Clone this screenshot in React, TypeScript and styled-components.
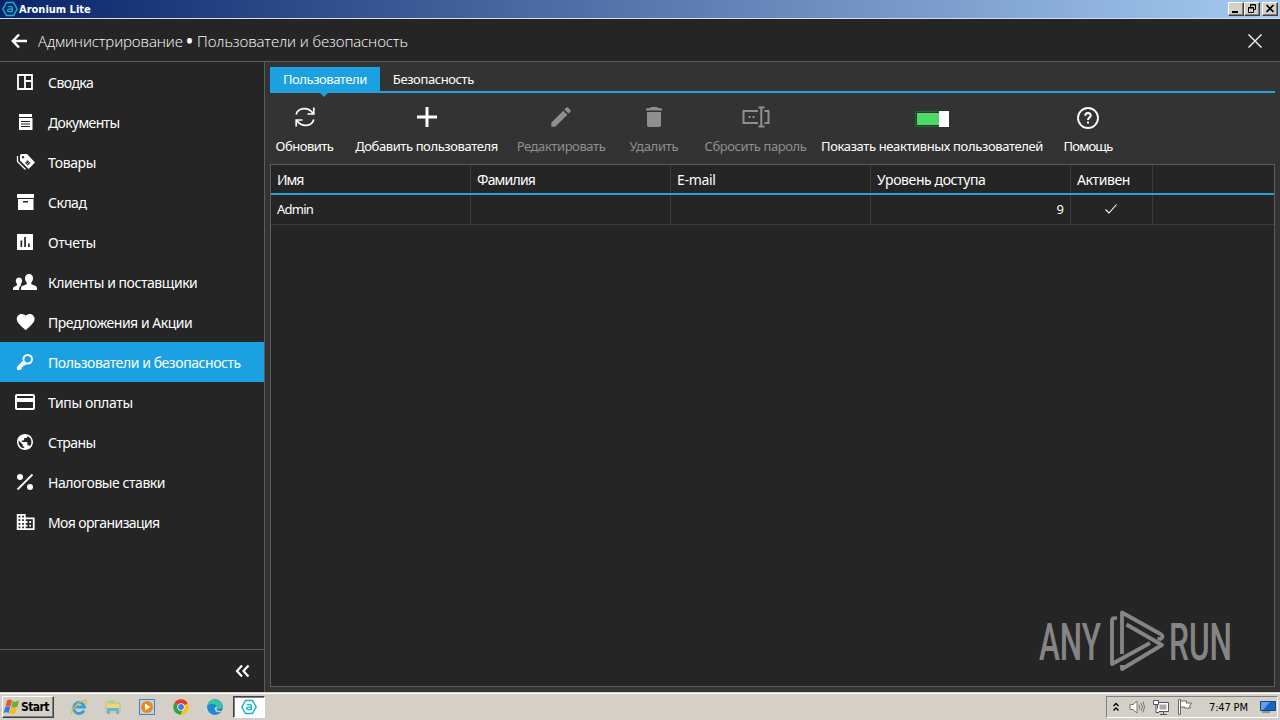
import { useState } from "react";
import type { ReactNode } from "react";
import styled, { createGlobalStyle } from "styled-components";
import { MdBusiness, MdCreditCard, MdEdit, MdFavorite, MdPublic } from "react-icons/md";

const GlobalStyle = createGlobalStyle`
  * {
    box-sizing: border-box;
  }

  body {
    margin: 0;
    background: #252525;
    overflow: hidden;
  }

  button {
    padding: 0;
    border: 0;
    background: none;
    color: inherit;
    font: inherit;
    letter-spacing: inherit;
  }
`;

const Screen = styled.div`
  width: 1280px;
  height: 720px;
  display: flex;
  flex-direction: column;
  color: #fff;
  background: #252525;
  font-family: "Noto Sans", "Open Sans", sans-serif;
  font-size: 14px;
  white-space: nowrap;
`;

/* ---------- window frame ---------- */

const TitleBar = styled.div`
  height: 19px;
  flex: none;
  display: flex;
  align-items: center;
  padding: 0 2px;
  background: linear-gradient(90deg, #0a246a, #a6caf0);
  border-bottom: 1px solid #d4e0ee;
  font-family: "DejaVu Sans Condensed", "DejaVu Sans", sans-serif;
  font-size: 11px;
  font-weight: bold;
`;

const AppName = styled.span`
  flex: 1;
  margin-left: 1px;
`;

const WinButton = styled.button<{ $gap?: boolean }>`
  width: 16px;
  height: 14px;
  display: flex;
  margin-left: ${(props) => (props.$gap ? "2px" : "0")};
  background: #d4d0c8;
  border: 1px solid;
  border-color: #fff #404040 #404040 #fff;
  box-shadow: inset -1px -1px 0 #808080;
`;

const Header = styled.header`
  height: 43px;
  flex: none;
  display: flex;
  align-items: center;
  padding: 1px 17px 0 10px;
  border-bottom: 1px solid #5c5c5c;
`;

const PageTitle = styled.h1`
  flex: 1;
  margin: 0 0 0 9px;
  font-family: "Open Sans", "Noto Sans", sans-serif;
  font-size: 15px;
  font-weight: 300;
  letter-spacing: -0.12px;
`;

const Bullet = styled.span`
  margin-right: 1px;
  font-weight: 800;
`;

const Body = styled.div`
  flex: 1;
  min-height: 0;
  display: flex;
`;

/* ---------- sidebar ---------- */

const Sidebar = styled.nav`
  width: 265px;
  flex: none;
  display: flex;
  flex-direction: column;
  border-right: 1px solid #5c5c5c;
`;

const NavItem = styled.button<{ $active: boolean; $spacing: number }>`
  height: 40px;
  display: flex;
  align-items: center;
  padding-left: 13px;
  gap: 11px;
  text-align: left;
  letter-spacing: ${(props) => props.$spacing}px;
  background: ${(props) => (props.$active ? "#1ba1e2" : "transparent")};
`;

const NavFooter = styled.div`
  height: 43px;
  margin-top: auto;
  display: flex;
  align-items: center;
  justify-content: flex-end;
  padding-right: 14px;
  border-top: 1px solid #5c5c5c;
`;

/* ---------- content ---------- */

const Content = styled.main`
  flex: 1;
  display: flex;
  flex-direction: column;
  padding: 5px;
  background: #333;
`;

const TabBar = styled.div`
  height: 26px;
  flex: none;
  display: flex;
  border-bottom: 2px solid #2ba0d8;
`;

const Tab = styled.button<{ $active: boolean; $spacing: number }>`
  position: relative;
  height: 24px;
  padding: 0 13px;
  font-size: 13px;
  letter-spacing: ${(props) => props.$spacing}px;
  background: ${(props) => (props.$active ? "#1ba1e2" : "transparent")};

  &::after {
    content: "";
    display: ${(props) => (props.$active ? "block" : "none")};
    position: absolute;
    left: 50%;
    top: 25px;
    margin-left: -6px;
    border: 5px solid transparent;
    border-top-color: #1ba1e2;
    border-bottom: 0;
  }
`;

const Toolbar = styled.div`
  height: 71px;
  flex: none;
  display: flex;
`;

const ToolButton = styled.button<{ $width: number; $muted?: boolean; $spacing: number }>`
  width: ${(props) => props.$width}px;
  display: flex;
  flex-direction: column;
  align-items: center;
  padding-top: 9px;
  gap: 5px;
  font-size: 13px;
  line-height: 18px;
  letter-spacing: ${(props) => props.$spacing}px;
  color: ${(props) => (props.$muted ? "#8f8f8f" : "#fff")};
`;

const ToolIcon = styled.span`
  height: 30px;
  display: flex;
  align-items: center;
`;

const Toggle = styled.span`
  width: 34px;
  height: 16px;
  display: flex;
  justify-content: flex-end;
  margin-top: 3px;
  background: #4cd964;
  border: 1px solid #1d6b2b;
  border-width: 1px 0 1px 1px;
  box-shadow: inset 1px 1px 0 #303030, inset 0 -1px 0 #303030;
`;

const ToggleKnob = styled.span`
  width: 10px;
  height: 16px;
  margin-top: -1px;
  background: #fff;
`;

const Grid = styled.div`
  flex: 1;
  position: relative;
  background: #252525;
  border: 1px solid #5c5c5c;
`;

const GridRow = styled.div<{ $head?: boolean }>`
  height: 30px;
  display: grid;
  grid-template-columns: 200px 200px 200px 200px 82px 1fr;
  font-size: ${(props) => (props.$head ? 14 : 13)}px;
  border-bottom: ${(props) => (props.$head ? "2px solid #2ba0d8" : "1px solid #3c3c3c")};
`;

const Cell = styled.div<{ $align?: string; $spacing?: number; $body?: boolean }>`
  display: flex;
  align-items: center;
  justify-content: ${(props) => props.$align ?? "flex-start"};
  padding: 0 6px ${(props) => (props.$body ? 2 : 0)}px;
  letter-spacing: ${(props) => props.$spacing ?? 0}px;
  border-right: 1px solid #3c3c3c;

  &:last-child {
    border-right: 0;
  }
`;

const Watermark = styled.svg`
  position: absolute;
  right: 34px;
  bottom: 7px;
  overflow: visible;
`;

/* ---------- taskbar ---------- */

const Taskbar = styled.footer`
  height: 28px;
  flex: none;
  display: flex;
  align-items: center;
  padding: 1px 2px 0;
  background: #d4d0c8;
  border-top: 1px solid #d4d0c8;
  box-shadow: inset 0 1px 0 #fff;
  color: #000;
  font-family: "DejaVu Sans Condensed", "DejaVu Sans", sans-serif;
`;

const StartButton = styled.button`
  width: 52px;
  height: 22px;
  display: flex;
  align-items: center;
  font-size: 12px;
  font-weight: bold;
  letter-spacing: -0.6px;
  border: 1px solid;
  border-color: #fff #404040 #404040 #fff;
  box-shadow: inset -1px -1px 0 #808080;
`;

const Launchers = styled.div`
  flex: 1;
  display: flex;
  align-items: center;
  margin-left: 8px;
`;

const Launcher = styled.button<{ $open?: boolean }>`
  width: ${(props) => (props.$open ? 32 : 34)}px;
  height: 22px;
  display: flex;
  align-items: center;
  justify-content: center;
  margin-left: ${(props) => (props.$open ? 1 : 0)}px;
  border: ${(props) => (props.$open ? "1px solid #fff" : "0")};
  border-top-color: #404040;
  border-left-color: #404040;
  box-shadow: ${(props) => (props.$open ? "inset 1px 1px 0 #808080" : "none")};
  background: ${(props) => (props.$open ? "#fff" : "none")};
`;

const Tray = styled.div`
  width: 172px;
  height: 22px;
  display: flex;
  align-items: center;
  padding-left: 5px;
  border: 1px solid;
  border-color: #808080 #fff #fff #808080;
`;

const TrayIcons = styled.div`
  display: flex;
  align-items: center;
  margin-left: 7px;
`;

const Clock = styled.span`
  width: 40px;
  margin: 0 11px 0 16px;
  font-size: 11px;
  letter-spacing: -0.15px;
`;

/* ---------- drawings ---------- */

function Glyph({ children }: { children: ReactNode }) {
  return (
    <svg width="24" height="24" viewBox="0 0 24 24" fill="currentColor">
      {children}
    </svg>
  );
}

const Hexagon = ({ size }: { size: number }) => (
  <svg width={size} height={size} viewBox="0 0 16 16" fill="none" stroke="#12b5cb">
    <path d="M4.5 1.5h7L15.2 8l-3.7 6.5h-7L.8 8z" strokeWidth="1.5" />
    <path d="M5.8 5.6h3.4q1 0 1 1v4H6.8q-1.2-.1-1.2-1.2T6.8 8.1h3.3" strokeWidth="1.4" />
  </svg>
);

const BackArrow = () => (
  <svg width="19" height="18" viewBox="0 0 19 18" fill="none" stroke="#fff" strokeWidth="2.4">
    <path d="M17 9H3M9 2.5 2.8 9 9 15.5" />
  </svg>
);

const navItems = [
  {
    label: "Сводка",
    spacing: -0.55,
    icon: (
      <path
        d="M5 5h14v14H5zM12 5v14M12 11h7"
        fill="none"
        stroke="currentColor"
        strokeWidth="1.8"
      />
    ),
  },
  {
    label: "Документы",
    spacing: -0.65,
    icon: (
      <>
        <path d="M6 4h13v3H6z" />
        <path fillRule="evenodd" d="M6 8h13.5v12H6zM8 11v1h9v-1zM8 13.5v1h9v-1zM8 16v1h9v-1z" />
      </>
    ),
  },
  {
    label: "Товары",
    spacing: -0.4,
    icon: (
      <>
        <path
          fillRule="evenodd"
          d="M8 4h6l8 8.5-6.5 6.500L7 10.500V5zM10 6a1.200 1.200 0 1 0 .1 0zM14.500 10l3 3-2.500 2.500-3-3z"
        />
        <path
          d="M13 12.500 15.500 10M14 14l3-3M15.500 15 18 12.500"
          stroke="currentColor"
          strokeWidth=".6"
        />
        <path d="M4.500 6v5.500l8 8" fill="none" stroke="currentColor" strokeWidth="1.3" />
      </>
    ),
  },
  {
    label: "Склад",
    spacing: -0.5,
    icon: <path fillRule="evenodd" d="M4 4h17v4H4zM5 9h15.500v11H5zM10 11v1.500h5V11z" />,
  },
  {
    label: "Отчеты",
    spacing: -0.4,
    icon: (
      <path
        fillRule="evenodd"
        d="M4 4h16v16H4zM7.500 10.500v6.500h1.700v-6.500zM11.200 7v10h1.700V7zM15 13.500V17h1.700v-3.500z"
      />
    ),
  },
  {
    label: "Клиенты и поставщики",
    spacing: -0.45,
    icon: (
      <>
        <path d="M16 4c2.600 0 4 1.800 4 4.300 0 1.800-.7 3.400-1.700 4.300v1.600l4.500 1.900q1.200.5 1.200 2V20H8v-1.900q0-1.500 1.200-2l4.500-1.900v-1.600c-1-.9-1.700-2.500-1.700-4.300C12 5.800 13.400 4 16 4z" />
        <path d="M6 7.500c1.900 0 3.100 1.300 3.100 3.200 0 1.300-.5 2.400-1.200 3.100v1.200l.6.300q-2.300 1-2.300 3V20H0v-1.500q0-1.200 1-1.600L4 15.200v-1.400c-.7-.7-1.200-1.800-1.200-3.100 0-1.900 1.300-3.200 3.200-3.200z" />
      </>
    ),
  },
  {
    label: "Предложения и Акции",
    spacing: -0.47,
    icon: <MdFavorite x={2} y={1.2} size={21.4} />,
  },
  {
    label: "Пользователи и безопасность",
    spacing: -0.43,
    icon: (
      <>
        <circle cx="14.7" cy="9.3" r="4.3" fill="none" stroke="currentColor" strokeWidth="2" />
        <path d="M10.200 10.500 4 16.700V20h3.300l1.500-1.500V17H10.300v-1.500h1.500l2-2z" />
      </>
    ),
  },
  {
    label: "Типы оплаты",
    spacing: -0.36,
    icon: <MdCreditCard size={24} />,
  },
  {
    label: "Страны",
    spacing: -0.55,
    icon: <MdPublic x={2.4} y={2.4} size={19.2} />,
  },
  {
    label: "Налоговые ставки",
    spacing: -0.44,
    icon: (
      <>
        <circle cx="7" cy="7" r="3" />
        <circle cx="17" cy="17" r="3" />
        <path d="M19.500 4.500l-15 15" stroke="currentColor" strokeWidth="1.8" />
      </>
    ),
  },
  {
    label: "Моя организация",
    spacing: -0.6,
    icon: <MdBusiness x={2} y={1.3} size={21.4} />,
  },
];

const RefreshIcon = () => (
  <svg width="22" height="22" viewBox="0 0 22 22" fill="none" stroke="currentColor" strokeWidth="1.7">
    <path d="M2.200 8.500C4 1.500 14 .5 18.800 7M19.800 1.500V8h-6.300" />
    <path d="M19.800 13.500C18 20.500 8 21.500 3.200 15M2.200 20.500V14h6.300" />
  </svg>
);

const tabs = [
  { label: "Пользователи", spacing: -0.45 },
  { label: "Безопасность", spacing: -0.41 },
];

const tools = [
  { label: "Обновить", width: 69, spacing: -0.5, icon: <RefreshIcon /> },
  {
    label: "Добавить пользователя",
    width: 175,
    spacing: -0.41,
    icon: (
      <svg width="20" height="20" viewBox="0 0 20 20" stroke="#fff" strokeWidth="3">
        <path d="M10 0v20M0 10h20" />
      </svg>
    ),
  },
  {
    label: "Редактировать",
    width: 94,
    muted: true,
    spacing: -0.42,
    icon: <MdEdit size={26} />,
  },
  {
    label: "Удалить",
    width: 92,
    muted: true,
    spacing: -0.25,
    icon: (
      <svg width="18" height="20" viewBox="0 0 18 20" fill="currentColor">
        <path d="M1 1.500q4-.2 5.500-1.500h5q1.500 1.300 5.500 1.500v2H1zM2 5h14v13q0 2-2 2H4q-2 0-2-2z" />
      </svg>
    ),
  },
  {
    label: "Сбросить пароль",
    width: 111,
    muted: true,
    spacing: -0.42,
    icon: (
      <svg width="28" height="22" viewBox="0 0 28 22" fill="none" stroke="currentColor" strokeWidth="2">
        <path d="M16 5H1.500v12H16M22.500 5h4v12h-4M19.300 1.500v19M16.500 1.500h6M16.500 20.500h6" />
        <path d="M6.500 11h2M10.500 11h2" />
      </svg>
    ),
  },
  {
    label: "Показать неактивных пользователей",
    width: 242,
    spacing: -0.38,
    icon: (
      <Toggle>
        <ToggleKnob />
      </Toggle>
    ),
  },
  {
    label: "Помощь",
    width: 70,
    spacing: -0.76,
    icon: (
      <svg width="22" height="24" viewBox="0 -2 22 24" fill="none" stroke="#fff">
        <circle cx="11" cy="11" r="10" strokeWidth="1.8" />
        <path d="M8.300 8.800q0-2.800 2.700-2.800t2.700 2.500c0 2-2.700 2-2.700 4.500M11 14.500v2" strokeWidth="2" />
      </svg>
    ),
  },
];

const columns = [
  { label: "Имя", spacing: -1.1 },
  { label: "Фамилия", spacing: -0.8 },
  { label: "E-mail", spacing: -0.3 },
  { label: "Уровень доступа", spacing: -0.4 },
  { label: "Активен", spacing: -0.4 },
  { label: "", spacing: 0 },
];

function WindowButtons() {
  return (
    <>
      <WinButton>
        <svg width="14" height="12" viewBox="0 0 14 12">
          <path d="M3 8h6v2H3z" />
        </svg>
      </WinButton>
      <WinButton>
        <svg width="14" height="12" viewBox="0 0 14 12" fill="none" stroke="#000">
          <path d="M5.500 4V1.500h5v5H8.500M5 2h6M3.500 4.500h5v5h-5zM3 5h6" />
        </svg>
      </WinButton>
      <WinButton $gap>
        <svg width="14" height="12" viewBox="0 0 14 12" stroke="#000" strokeWidth="1.7">
          <path d="M3.500 2l7 7M10.500 2l-7 7" />
        </svg>
      </WinButton>
    </>
  );
}

function AnyRun() {
  return (
    <Watermark
      width="202"
      height="72"
      viewBox="0 0 202 72"
      fill="#858585"
      fontFamily="Roboto, sans-serif"
      fontSize="51"
      fontWeight="500"
    >
      <text x="1" y="52.5" textLength="62" lengthAdjust="spacingAndGlyphs">
        ANY
      </text>
      <text x="131" y="52.5" textLength="63" lengthAdjust="spacingAndGlyphs">
        RUN
      </text>
      <g fill="none" stroke="#858585" strokeWidth="3.8" strokeLinejoin="round">
        <path d="M84 47V5.500L122.500 27q4 3 0 5l-3-.5" />
        <path d="M79 11.500q-5-1.500-5 2V57L112 36" />
        <path d="M88.500 17.500 124 38 84 62v-4" />
      </g>
    </Watermark>
  );
}

function SystemTray() {
  return (
    <Tray>
      <svg width="8" height="12" viewBox="0 0 8 12" fill="none" stroke="#000" strokeWidth="1.3">
        <path d="M1.500 5 4 2.500 6.500 5M1.500 9.500 4 7l2.500 2.500" />
      </svg>
      <TrayIcons>
        <svg width="18" height="16" viewBox="0 0 18 16" fill="none" stroke="#777">
          <g transform="translate(2 0)">
            <path d="M1 5.500h3L8 2v12l-4-3.500H1z" fill="#fff" />
            <path d="M10 5.500q1.500 2.500 0 5M12 4q3 4 0 8M14 2.500q3 5.500 0 11" />
          </g>
        </svg>
        <svg width="26" height="18" viewBox="0 0 26 18" fill="#fff" stroke="#555">
          <path d="M12.500 4.500h11v9h-11zM15 16.500h7M18.500 14v2" />
          <path d="M14.500 6.500h7v5h-7z" fill="#aaa" stroke="none" />
          <path d="M8.500 2.500h5v4h-5zM11 7v7.500h3" />
        </svg>
        <svg width="22" height="18" viewBox="0 0 22 18" fill="#fff" stroke="#666">
          <path d="M7.500 1.500h2v15h-2zM9.500 3h6v2h5l-2 3 1 2h-6V9h-4z" />
        </svg>
      </TrayIcons>
      <Clock>7:47 PM</Clock>
      <svg width="16" height="14" viewBox="0 0 16 14">
        <path d="M.5 1.500h15v9H.5z" fill="#1c61c4" stroke="#164488" />
        <path d="M1 2h9L3 10H1z" fill="#5ea1ea" />
        <path d="M2 12h8" stroke="#555" />
      </svg>
    </Tray>
  );
}

function App() {
  const [section, setSection] = useState(7);
  const [tab, setTab] = useState(0);

  return (
    <Screen>
      <GlobalStyle />
      <TitleBar>
        <Hexagon size={16} />
        <AppName>Aronium Lite</AppName>
        <WindowButtons />
      </TitleBar>
      <Header>
        <BackArrow />
        <PageTitle>
          Администрирование <Bullet>•</Bullet> Пользователи и безопасность
        </PageTitle>
        <svg width="16" height="16" viewBox="0 0 16 16" stroke="#fff" strokeWidth="1.3">
          <path d="M1.500 1.500l13 13M14.500 1.500l-13 13" />
        </svg>
      </Header>
      <Body>
        <Sidebar>
          {navItems.map((item, i) => (
            <NavItem
              key={item.label}
              $active={i === section}
              $spacing={item.spacing}
              onClick={() => setSection(i)}
            >
              <Glyph>{item.icon}</Glyph>
              {item.label}
            </NavItem>
          ))}
          <NavFooter>
            <svg width="15" height="14" viewBox="0 0 15 14" fill="none" stroke="#fff" strokeWidth="2.2">
              <path d="M7 1.500 2 7l5 5.500M13.500 1.500 8.500 7l5 5.500" />
            </svg>
          </NavFooter>
        </Sidebar>
        <Content>
          <TabBar>
            {tabs.map((item, i) => (
              <Tab
                key={item.label}
                $active={i === tab}
                $spacing={item.spacing}
                onClick={() => setTab(i)}
              >
                {item.label}
              </Tab>
            ))}
          </TabBar>
          <Toolbar>
            {tools.map((tool) => (
              <ToolButton
                key={tool.label}
                $width={tool.width}
                $muted={tool.muted}
                $spacing={tool.spacing}
              >
                <ToolIcon>{tool.icon}</ToolIcon>
                {tool.label}
              </ToolButton>
            ))}
          </Toolbar>
          <Grid>
            <GridRow $head>
              {columns.map((column) => (
                <Cell key={column.label} $spacing={column.spacing}>
                  {column.label}
                </Cell>
              ))}
            </GridRow>
            <GridRow>
              <Cell $body $spacing={-0.75}>
                Admin
              </Cell>
              <Cell />
              <Cell />
              <Cell $body $align="flex-end">
                9
              </Cell>
              <Cell $body $align="center">
                <svg width="16" height="12" viewBox="0 0 16 12" fill="none" stroke="#fff" strokeWidth="1.1">
                  <path d="M1.500 6.500 5 10l7.500-8.500" />
                </svg>
              </Cell>
              <Cell />
            </GridRow>
            <AnyRun />
          </Grid>
        </Content>
      </Body>
      <Taskbar>
        <StartButton>
          <svg width="18" height="16" viewBox="0 0 18 16">
            <path d="M4 1.500q3-2 5 0L7.700 7.500q-2.500-1.500-5 0z" fill="#e8562a" />
            <path d="M9.500 2q3 1.500 6.500-.5L14.500 7.500q-3 2-6 .5z" fill="#6fae2e" />
            <path d="M2.200 8q3-1.500 5 0L5.700 14q-2.500-1.500-5 0z" fill="#3b78d8" />
            <path d="M8 8.500q3 1.500 6-.5L12.500 14q-3 2-6 .5z" fill="#f7bb23" />
          </svg>
          Start
        </StartButton>
        <Launchers>
          <Launcher>
            <svg width="18" height="18" viewBox="0 0 18 18" fill="none">
              <path d="M14 12.500A5.500 5.500 0 1 1 14.500 9H5" stroke="#3a9fdc" strokeWidth="2.8" />
              <path d="M2 16C-1 13 12 0 16 3q1 1-.5 3" stroke="#e8b93a" strokeWidth="1.3" />
            </svg>
          </Launcher>
          <Launcher>
            <svg width="16" height="16" viewBox="0 0 16 16">
              <path d="M1 3h5l1 1h8v9H1z" fill="#efd67e" stroke="#c9a94b" strokeWidth=".6" />
              <path d="M3 1.500h7v3H3z" fill="#9fd3a0" />
              <path d="M2 9h12v6h-3v-3H5v3H2z" fill="#62b5df" />
            </svg>
          </Launcher>
          <Launcher>
            <svg width="16" height="16" viewBox="0 0 16 16">
              <path d="M.5.5h15v15H.5z" fill="#b9d6ee" stroke="#3c82bf" />
              <circle cx="8" cy="8" r="6" fill="#f08519" />
              <path d="M6 4.500 11.500 8 6 11.500z" fill="#fff" />
            </svg>
          </Launcher>
          <Launcher>
            <svg width="16" height="16" viewBox="0 0 16 16">
              <circle cx="8" cy="8" r="7.7" fill="#fbc116" />
              <path d="M1.300 4.200A7.700 7.700 0 0 1 14.700 4.200L8 8z" fill="#e33b2e" />
              <path d="M1.300 4.200A7.700 7.700 0 0 0 7.500 15.700L10 10 8 8z" fill="#2ba24c" />
              <circle cx="8" cy="8" r="3.7" fill="#fff" />
              <circle cx="8" cy="8" r="2.9" fill="#3f7ee8" />
            </svg>
          </Launcher>
          <Launcher>
            <svg width="16" height="16" viewBox="0 0 16 16">
              <circle cx="8" cy="8" r="7.7" fill="#1668b8" />
              <path d="M.4 7C1-2 15.500-1 15.700 7c0 4-5.500 4-6 2.500C11 7 6 3 .4 7z" fill="#35c4a5" />
              <path d="M.4 7Q6 3 9.500 7c-4 0-3 6 4.500 5.500C10 17.500 0 16 .4 7z" fill="#1b8bdb" />
              <path d="M9.700 9.500q-.5 3 5.300 2l-1.500 1.500Q8 14 7.500 9.500q.2-2 2.200-2 1.200 1 0 2z" fill="#d4d0c8" />
            </svg>
          </Launcher>
          <Launcher $open>
            <Hexagon size={16} />
          </Launcher>
        </Launchers>
        <SystemTray />
      </Taskbar>
    </Screen>
  );
}

export default App;
